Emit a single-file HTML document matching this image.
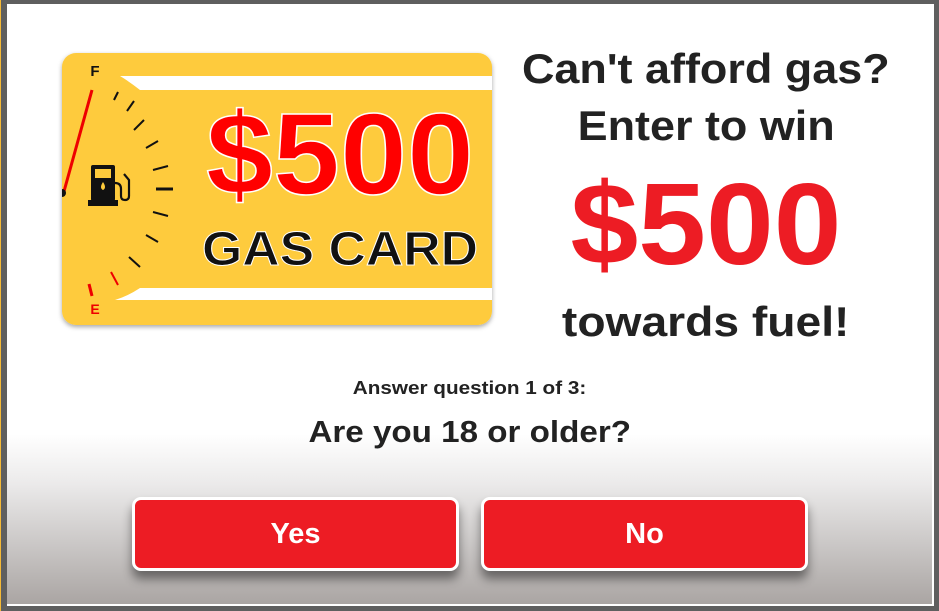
<!DOCTYPE html>
<html><head><style>
body{margin:0;width:939px;height:611px;background:#5f5f5f;overflow:hidden;font-family:"Liberation Sans",sans-serif;position:relative}
#strip{position:absolute;left:0;top:0;width:1px;height:611px;background:#f5b935}
#in{position:absolute;left:7px;top:4px;width:925px;height:600px;background:linear-gradient(#fff 0,#fff 430px,#ebeaea 480px,#aaa5a3 600px);border-bottom:2px solid #fff;border-right:2px solid #fff}
.t{position:absolute;text-align:center;font-weight:bold;color:#222}
.t span{display:inline-block}
.btn{position:absolute;top:497px;width:321px;height:68px;background:#ed1c24;border:3px solid #fff;border-radius:9px;box-shadow:0 8px 10px rgba(0,0,0,.45);color:#fff;font-weight:bold;font-size:29px;line-height:68px;text-align:center}
</style></head><body>
<div id="strip"></div>
<div id="in"></div>
<svg style="position:absolute;left:55px;top:48px" width="450" height="290" viewBox="55 48 450 290">
<defs><filter id="s"><feDropShadow dx="0" dy="2" stdDeviation="2.5" flood-opacity=".35"/></filter>
<clipPath id="c"><rect x="62" y="53" width="430" height="272" rx="14"/></clipPath></defs>
<rect x="62" y="53" width="430" height="272" rx="14" fill="#fecb3c" filter="url(#s)"/>
<g clip-path="url(#c)">
<path d="M120 76 L492 76 L492 90 L140 90 Q130 82 120 76Z" fill="#fff"/>
<path d="M115 300 L492 300 L492 288 L140 288 Q128 296 115 300Z" fill="#fff"/>
<g stroke="#111" stroke-width="2">
<line x1="114" y1="100" x2="118" y2="92"/><line x1="134" y1="101" x2="127" y2="111"/>
<line x1="144" y1="120" x2="134" y2="130"/><line x1="158" y1="141" x2="146" y2="148"/>
<line x1="168" y1="166" x2="153" y2="170"/><line x1="168" y1="216" x2="153" y2="212"/>
<line x1="158" y1="242" x2="146" y2="235"/><line x1="140" y1="267" x2="129" y2="257"/>
<line x1="156" y1="189" x2="173" y2="189" stroke-width="3"/></g>
<line x1="118" y1="285" x2="111" y2="272" stroke="#e00" stroke-width="2"/>
<line x1="92" y1="296" x2="89" y2="284" stroke="#e00" stroke-width="3"/>
<line x1="63" y1="195" x2="92" y2="90" stroke="#e00" stroke-width="3"/>
<circle cx="62" cy="193" r="4" fill="#111"/>
<rect x="91" y="165" width="24" height="36" rx="2" fill="#111"/><rect x="88" y="200" width="30" height="6" fill="#111"/>
<rect x="95" y="169" width="16" height="9" fill="#fecb3c"/>
<path d="M103 182 q-4 6 0 8 q4-2 0-8z" fill="#fecb3c"/>
<path d="M115 183 q6 0 6 6 v7 q0 4 4 4 q4 0 4-4 v-16 l-5-6" stroke="#111" stroke-width="2.2" fill="none"/>
<text x="95" y="76" font-size="15" font-weight="bold" text-anchor="middle" fill="#111">F</text>
<text x="95" y="314" font-size="14" font-weight="bold" text-anchor="middle" fill="#e00">E</text>
<text x="340" y="194" font-size="116" font-weight="bold" text-anchor="middle" fill="#f00" stroke="#fff" stroke-width="1.5" textLength="268" lengthAdjust="spacingAndGlyphs">$500</text>
<text x="340" y="265" font-size="48" font-weight="bold" text-anchor="middle" fill="#111" stroke="#fff" stroke-width="1" textLength="276" lengthAdjust="spacingAndGlyphs">GAS CARD</text>
</g></svg>
<div class="t" style="left:500px;width:412px;top:44px;font-size:42px;line-height:50px"><span style="transform:scaleX(1.07)">Can't afford gas?</span></div>
<div class="t" style="left:500px;width:412px;top:101px;font-size:42px;line-height:50px"><span style="transform:scaleX(1.07)">Enter to win</span></div>
<div class="t" style="left:500px;width:412px;top:164px;font-size:116px;line-height:120px;color:#ed1c24"><span style="transform:scaleX(1.05)">$500</span></div>
<div class="t" style="left:500px;width:412px;top:297px;font-size:42px;line-height:50px"><span style="transform:scaleX(1.1)">towards fuel!</span></div>
<div class="t" style="left:7px;width:925px;top:378px;font-size:18px"><span style="transform:scaleX(1.15)">Answer question 1 of 3:</span></div>
<div class="t" style="left:7px;width:925px;top:414px;font-size:31px"><span style="transform:scaleX(1.07)">Are you 18 or older?</span></div>
<div class="btn" style="left:132px">Yes</div>
<div class="btn" style="left:481px">No</div>
</body></html>
